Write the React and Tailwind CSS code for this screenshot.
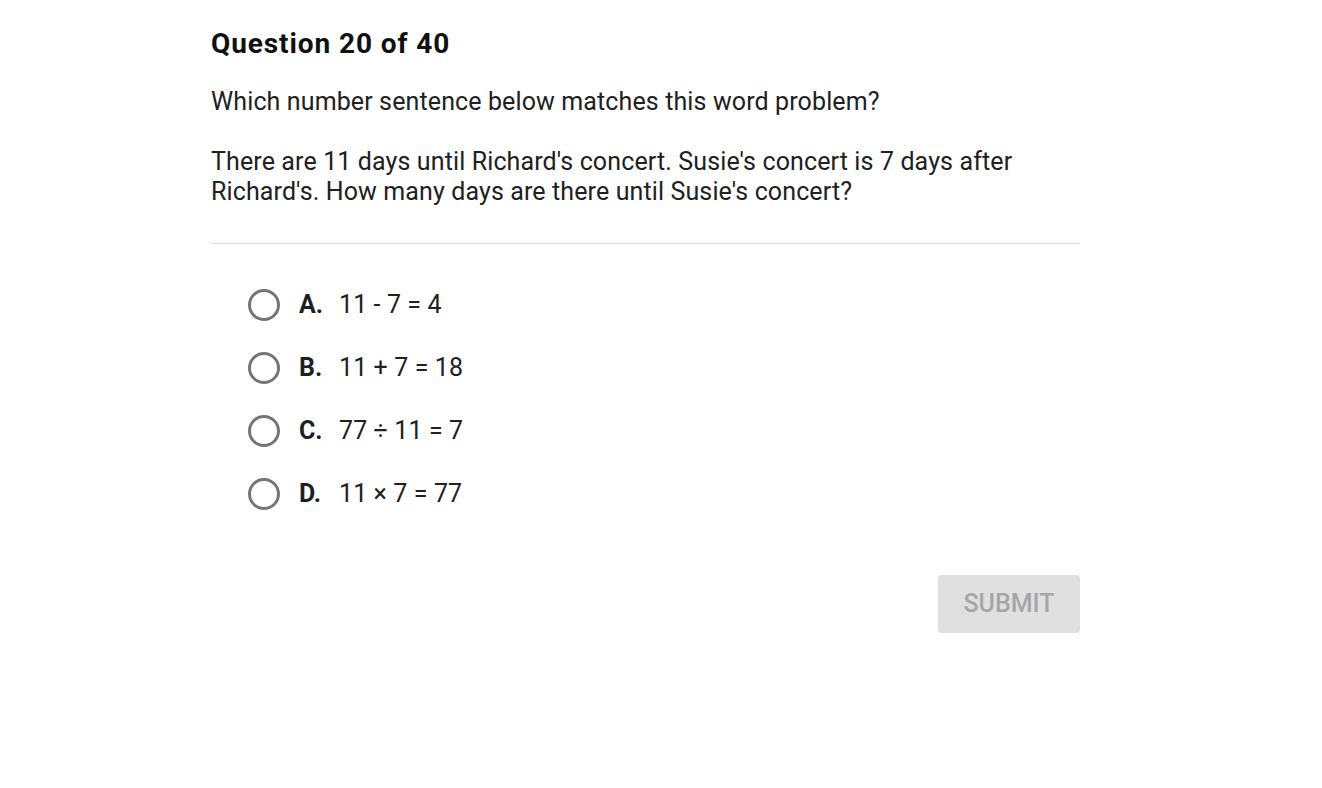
function Option({ letter, text }) {
  return (
    <label className="flex items-center h-[63px] cursor-pointer">
      <span className="w-[32px] h-[32px] rounded-full border-[3px] border-[#757575] shrink-0"></span>
      <span className="ml-[19px] w-[40px] font-bold text-[#1f1f1f]">{letter}.</span>
      <span className="text-[#212121] tracking-[0.1px]">{text}</span>
    </label>
  )
}

export default function App() {
  return (
    <div className="min-h-screen bg-white font-['Roboto',sans-serif] text-[#212121]">
      <div className="w-[869px] ml-[211px] pt-[27px]">
        <h1 className="text-[28px] leading-[34px] font-bold tracking-[0.9px] text-[#111]">Question 20 of 40</h1>
        <p className="mt-[26px] text-[25px] leading-[30px] tracking-[0.12px]">Which number sentence below matches this word problem?</p>
        <p className="mt-[30px] text-[25px] leading-[30px] tracking-[0.12px]">
          There are 11 days until Richard's concert. Susie's concert is 7 days after Richard's. How many days are there until Susie's concert?
        </p>
        <div className="mt-[36px] border-t border-[#dcdcdc]"></div>
        <div className="mt-[29px] ml-[37px] text-[25px]">
          <Option letter="A" text="11 - 7 = 4" />
          <Option letter="B" text="11 + 7 = 18" />
          <Option letter="C" text="77 ÷ 11 = 7" />
          <Option letter="D" text="11 × 7 = 77" />
        </div>
        <div className="flex justify-end mt-[50px]">
          <button className="w-[142px] h-[58px] rounded-[4px] bg-[#e0e0e0] text-[#a6a6a6] text-[25px] font-medium">SUBMIT</button>
        </div>
      </div>
    </div>
  )
}
